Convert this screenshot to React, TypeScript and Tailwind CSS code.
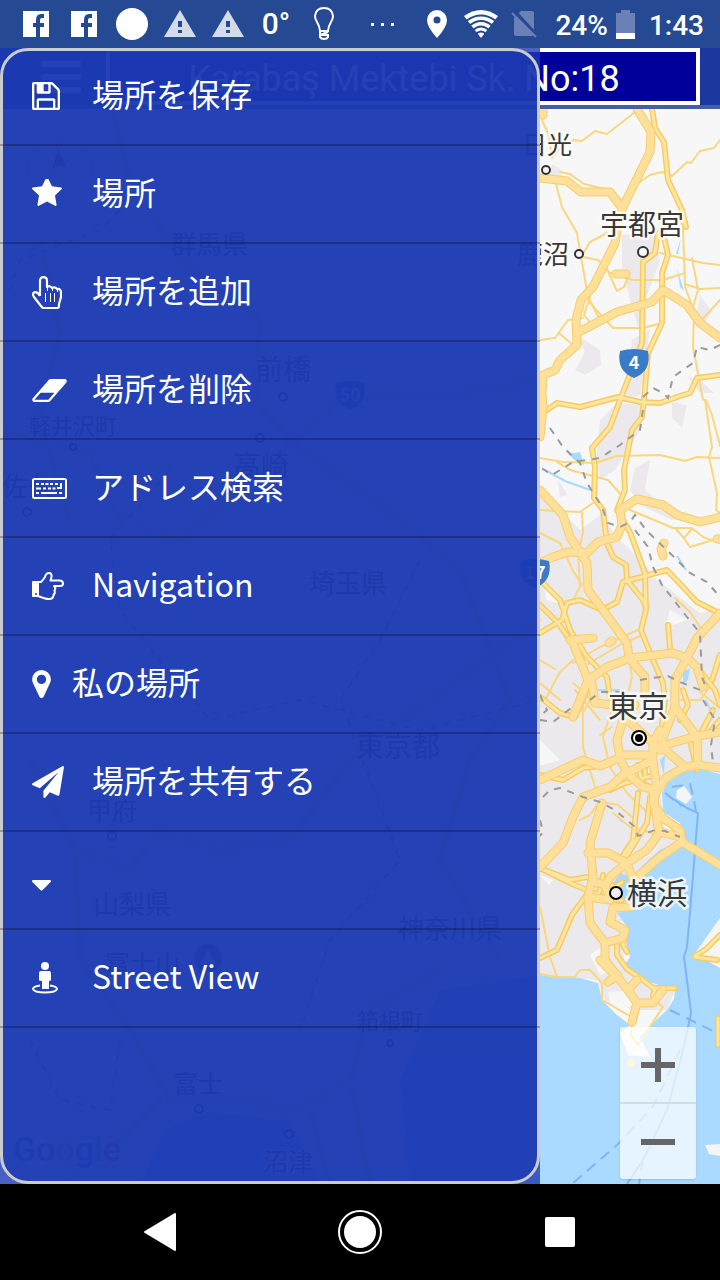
import { useState, type ReactNode } from "react"

type RoadKind = "major" | "medium" | "thin"

const roads: Record<RoadKind, string[]> = {
  thin: [
    "M573 140L582 141L595 131L607 134L635 112",
    "M545 109L542 120L549 136L552 158M552 158L560 148L573 140",
    "M640 182L650 175L662 172L672 176L687 162L691 163L700 151L714 148L720 140",
    "M555 180L562 207L577 233L588 297L600 320",
    "M583 254L590 242L607 233",
    "M583 257L598 260L610 273L633 280L663 280L685 273",
    "M605 265L617 291L624 287L629 275",
    "M560 172L570 174L584 184L610 190",
    "M660 253L703 263L720 265",
    "M683 227L685 287L690 300L694 315L693 347L703 400",
    "M692 258L698 290L692 310M685 284L700 289L720 288",
    "M540 340L555 338L568 320L583 318M560 334L573 345M590 297L584 315L592 325",
    "M590 303L613 328L643 328L662 323",
    "M720 300L697 325",
    "M540 458L563 462L595 463L617 456L660 455L685 461L697 457L720 458",
    "M557 462L570 470L608 480L623 497",
    "M705 400L712 447L709 457L717 493L716 510L720 513M706 400L712 415L720 446",
    "M540 510L580 512L593 503",
    "M582 513L583 533L578 553L580 587L573 600",
    "M630 510L673 528L692 528L703 537L720 543M683 537L690 547L720 538",
    "M675 528L684 538L692 529",
    "M540 533L560 543L573 571L582 585",
    "M573 663L600 647L638 630M588 664L620 645L640 636",
    "M540 660L555 669M545 700L560 672L573 660",
    "M675 598L690 612L700 627M573 683L585 693L590 700",
    "M583 707L583 747L595 787L600 790",
    "M613 707L603 737L610 767L627 793L645 810",
    "M540 907L550 957L557 977M613 813L630 827L655 834M607 803L618 805L632 817",
    "M540 974L557 977L575 977L580 970L590 970L602 983L602 1000L628 1015",
    "M632 1020L631 1035L638 1045L663 1007L657 1002",
    "M575 690L600 720M595 690L583 713M540 683L560 700M630 665L632 677L629 690",
    "M600 735L612 727M675 700L700 700L715 680M700 692L720 708",
    "M580 820L590 815L597 805",
  ],
  medium: [
    "M652 109L655 128L664 142L668 180L682 210L686 227L680 215",
    "M658 233L655 253L643 262L642 343L620 400L610 427L592 448L595 467L594 498L603 510L607 543L613 557L626 565L627 580L643 600L646 607",
    "M663 233L668 255L662 273L662 323L648 353L644 400L642 417L632 430L624 470L625 490L617 510L630 532L645 573L646 610L641 630L653 660L663 683L665 700",
    "M543 412L547 410L557 403L580 407L603 401L618 397L640 402L660 403L680 396L690 393L697 378L720 375",
    "M540 580L560 600L570 630L587 657L607 677L610 697",
    "M540 605L558 623L570 640",
    "M540 633L562 620L567 603L580 600L602 610L617 602L623 582L667 570L697 602L717 612",
    "M668 625L670 648",
    "M540 697L560 713L575 717L587 690",
    "M540 775L563 780L583 768L600 766",
    "M638 793L633 840L622 857M650 797L647 823L626 857",
    "M540 868L570 883L587 890L610 900L622 900M545 870L570 880L587 877L602 883",
    "M588 893L572 915L557 950L540 958",
    "M617 943L617 955L627 969L643 980L653 988L675 988",
    "M625 938L623 945L627 952M655 988L653 996",
    "M603 875L600 890L596 897M607 883L615 887L622 882",
    "M638 765L643 787M632 777L650 787M645 756L645 775M700 735L713 710M697 770L690 740",
    "M665 700L662 725M683 690L688 705L680 720M720 720L707 735M697 667L715 690L720 705",
    "M695 956L706 949L720 935M695 957L717 960M718 1018L718 1045",
    "M610 790L625 783L655 775M720 655L712 680",
  ],
  major: [
    "M637 109L651 132L650 152L620 213L615 243L593 287L581 300L576 320L577 345L560 360L555 370L543 375L542 393L543 407L540 437",
    "M540 178L567 181L581 192L610 192L622 208",
    "M577 333L617 312L652 302L663 290L687 305L700 323L720 338",
    "M543 100L543 115M616 274L626 274",
    "M540 490L563 515L570 537L587 563L588 590L603 610L627 643L629 658L645 677L645 693",
    "M540 563L553 557L568 552L587 553L598 542L617 537L622 525L620 510L637 499L663 505L677 515L700 522L720 517",
    "M588 680L607 667L630 658L673 653L687 658L697 667L703 687",
    "M720 613L697 638L687 658L675 680L675 707L697 737L698 765L720 768",
    "M573 643L588 680L580 700L573 717",
    "M570 640L593 638M609 643L612 641M664 543L661 549L663 556M717 539L720 539",
    "M540 780L583 760L600 766L620 758L617 740L623 720L635 705",
    "M592 683L595 703L613 705L633 725L653 743L660 750",
    "M620 755L653 755L653 743L660 730L662 740L675 707",
    "M655 748L693 737L720 732",
    "M663 748L677 760L685 767L667 777L657 790L653 803L663 818L680 830L682 842L720 865",
    "M620 758L627 773L643 787L657 790M627 773L653 760L657 790M698 765L685 767",
    "M623 775L610 787L583 797L573 817L563 843L540 867",
    "M602 803L590 843L593 877L588 897L590 923L605 943L605 960L620 980L628 990L637 1003L653 1003L663 990M637 1003L632 1022",
    "M588 853L608 853L627 863L633 880",
    "M653 793L658 827L660 832L647 850L627 863L612 875L605 885",
    "M682 842L660 857L637 877M660 832L680 837",
    "M588 897L610 900L605 885L595 882",
    "M630 907L613 908L610 922L625 930L623 938L605 943",
    "M608 982L618 975M628 990L637 980M600 960L615 975",
  ],
}

// prefectures to the west, mostly hidden by the drawer
const westRoads = [
  "M110 100L130 180L180 260L260 320L255 400L290 440L400 520L460 570L510 700L470 760L440 860L500 960",
  "M0 430L90 455L120 520L180 540L250 480L340 400L450 395L540 380",
  "M30 760L75 850L130 870L160 830L220 850L290 840L350 760L430 700L540 620",
  "M75 850L80 960L130 1030L170 1100L240 1100L300 1110L350 1080L370 1010L440 970",
  "M60 1184L130 1130L160 1100M310 1110L330 1184M350 1080L370 1184M40 240L60 330L40 420L70 520",
]

const rails = [
  "M550 428L563 447L580 463L587 483L602 507L608 523L620 527L630 522L635 515L646 530L677 560L690 573L707 582L720 597",
  "M643 410L640 430L620 445L600 458L573 462L552 475L540 467",
  "M635 530L648 547L653 567L662 585L687 617L700 633L702 677L707 690",
  "M643 397L653 388L663 393L668 398L673 377L693 363L697 347L710 350L720 345",
  "M543 797L550 790L560 788L583 797L600 802L615 810L635 827L638 836L655 830L665 831L680 837",
  "M540 720L553 722L575 705M590 700L600 692L620 692M640 680L652 678L668 676L680 682L700 690",
  "M540 695L547 710L540 716M703 700L715 720L711 745L713 763M540 820L543 832L540 836",
  "M130 200L100 230L20 260L10 290M170 470L110 540L120 610L160 660L210 720L300 700L420 730L540 700",
  "M420 560L380 640L340 700L400 860L330 940L300 1030M30 1040L60 1100L110 1110L120 1040",
]

const urban = [
  "M622 235L655 232L660 262L645 300L642 340L630 300L622 265Z",
  "M577 335L600 350L601 365L585 375L575 370L585 352Z",
  "M700 295L712 312L703 325L697 312Z",
  "M632 340L650 330L640 395L625 400Z",
  "M600 420L617 403L640 405L640 430L615 470L600 480L597 455Z",
  "M650 460L645 490L662 504L690 515L672 520L640 505L630 490L635 468Z",
  "M672 402L687 405L682 428L672 418Z",
  "M688 377L700 380L714 393L700 393Z",
  "M540 490L580 530L600 515L620 540L650 570L670 575L700 605L720 615L720 770L680 773L660 790L665 830L683 842L640 880L620 925L625 965L640 980L675 990L667 1010L640 1010L605 1003L598 980L540 975Z",
  "M558 480L568 495L560 497Z",
  "M560 182L562 170L552 164L550 180Z",
]

const land = [
  "M540 740L560 760L540 766Z",
  "M677 790L683 785L692 797L687 803L677 798Z",
  "M545 585L556 590L558 603L546 600Z",
  "M641 545L655 556L680 570L714 610L700 613L670 590L650 575Z",
  "M608 992L630 990L635 1004L622 1010L610 1003Z",
  "M590 955L604 945L613 970L600 975Z",
  "M540 875L553 880L549 885Z",
  "M670 610L688 620L665 628Z",
]

function Label({ x, y, size = 26, children }: { x: number; y: number; size?: number; children: ReactNode }) {
  return (
    <text
      x={x}
      y={y}
      fontSize={size}
      fill="#383838"
      stroke="#ffffff"
      strokeOpacity={0.75}
      strokeWidth={5}
      strokeLinejoin="round"
      paintOrder="stroke"
    >
      {children}
    </text>
  )
}

function Town({ x, y, r = 4 }: { x: number; y: number; r?: number }) {
  return <circle cx={x} cy={y} r={r} fill="#f7f7f7" stroke="#333" strokeWidth="2" />
}

function Shield({ x, y, children }: { x: number; y: number; children: ReactNode }) {
  return (
    <g transform={`translate(${x} ${y})`}>
      <path d="M-14 -12Q0 -16 14 -12Q18 8 0 15Q-18 8 -14 -12Z" fill="#3a7bc8" />
      <text y="6" textAnchor="middle" fontSize="18" fontWeight="700" fill="#fff" className="font-['Noto_Sans_CJK_JP',sans-serif]">
        {children}
      </text>
    </g>
  )
}

function MapCanvas() {
  return (
    <svg
      viewBox="0 109 720 1075"
      preserveAspectRatio="xMaxYMid slice"
      className="absolute inset-0 size-full font-['Noto_Sans_CJK_JP',sans-serif]"
      role="img"
      aria-label="地図"
    >
      <rect y="109" width="720" height="1075" fill="#f7f7f7" />
      <g fill="#ece9ed">
        {urban.map((d) => <path key={d} d={d} />)}
      </g>
      <g fill="#f7f7f7">
        {land.map((d) => <path key={d} d={d} />)}
      </g>
      <path
        fill="#aadaff"
        d="M720 774L700 769L683 772L667 783L662 793L663 812L680 823L683 840L660 850L643 865L633 877L620 873L613 883L618 895L633 910L617 913L627 927L627 945L630 957L623 967L643 980L675 990L674 999L667 1010L653 1023L640 1037L650 1057L628 1055L620 1033L630 1025L617 1015L602 1000L598 983L580 978L540 975L440 990L400 1080L410 1184H720Z"
      />
      <path fill="#aadaff" d="M140 1184L165 1130L210 1112L290 1120L320 1184Z" />
      <path fill="#aadaff" d="M568 454L580 452L584 465L577 462ZM683 672L690 668L688 680L683 684ZM660 760L665 755L664 775ZM617 818L629 825L621 822ZM681 238L676 254L678 254ZM677 268L684 291L680 287Z" />
      <path fill="#f5f5f5" d="M677 790L684 786L692 797L686 804L676 798ZM693 956L720 918V968L709 962L706 957ZM705 1145L720 1144V1156L709 1154ZM665 840L648 857L642 860Z" />
      <path d="M545 470L565 481L590 490M677 556L686 570M598 690L620 690M705 700L714 715" fill="none" stroke="#aadaff" strokeWidth="2" />
      <g fill="none" stroke="#7fb5f5" strokeWidth="2">
        <path d="M670 797L687 808L698 813L690 913L687 947L684 957L687 980L691 1013L683 1050L667 1110L643 1160L627 1184" />
        <path d="M665 793L682 806M672 787L690 784L694 800L696 812M670 1010L717 1033M680 1050L653 1107L617 1145L573 1183M643 1160L639 1184" strokeDasharray="11 7" />
      </g>
      <g fill="none" strokeLinecap="round" strokeLinejoin="round">
        {roads.thin.map((d) => <path key={d} d={d} stroke="#f9d77f" strokeWidth="2" />)}
        {roads.medium.map((d) => <path key={d} d={d} stroke="#f6cb62" strokeWidth="6" />)}
        {roads.medium.map((d) => <path key={d} d={d} stroke="#ffe5a2" strokeWidth="3" />)}
        {westRoads.map((d) => <path key={d} d={d} stroke="#fbe0a0" strokeWidth="4" />)}
        {roads.major.map((d) => <path key={d} d={d} stroke="#f7cd68" strokeWidth="9" />)}
        {roads.major.map((d) => <path key={d} d={d} stroke="#ffe09a" strokeWidth="7" />)}
      </g>
      <g fill="none" stroke="#9b9b9b" strokeWidth="2" strokeDasharray="7 7">
        {rails.map((d) => <path key={d} d={d} />)}
      </g>
      <circle cx="631" cy="1063" r="4" fill="#ffe09a" />

      <circle cx="60" cy="169" r="32" fill="#fff" stroke="#ddd" />
      <path d="M58 149L67 168L58 165L52 170Z" fill="#c33" />

      <Label x={170} y={254}>群馬県</Label>
      <Label x={255} y={380} size={28}>前橋</Label>
      <Town x={283} y={397} />
      <Shield x={350} y={395}>50</Shield>
      <Label x={29} y={434} size={22}>軽井沢町</Label>
      <Town x={73} y={447} r={3} />
      <Town x={260} y={438} />
      <Label x={233} y={476} size={28}>高崎</Label>
      <Label x={2} y={496}>佐久</Label>
      <Town x={27} y={512} />
      <Label x={309} y={593}>埼玉県</Label>
      <Label x={356} y={757} size={28}>東京都</Label>
      <Label x={87} y={820} size={25}>甲府</Label>
      <Town x={112} y={836} />
      <Label x={93} y={914}>山梨県</Label>
      <Label x={398} y={938}>神奈川県</Label>
      <Label x={105} y={973} size={25}>富士山</Label>
      <circle cx="208" cy="958" r="14" fill="#6a7a80" />
      <path d="M200 964L208 950L216 964Z" fill="#fff" />
      <Label x={357} y={1029} size={22}>箱根町</Label>
      <Town x={390} y={1043} r={3} />
      <Label x={173} y={1093} size={25}>富士</Label>
      <Town x={199} y={1109} />
      <Town x={289} y={1134} />
      <Label x={263} y={1171} size={25}>沼津</Label>
      <text x="13" y="1161" fontSize="34" fontWeight="500" className="font-['Roboto',sans-serif]">
        <tspan fill="#4285f4">G</tspan>
        <tspan fill="#ea4335">o</tspan>
        <tspan fill="#fbbc05">o</tspan>
        <tspan fill="#4285f4">g</tspan>
        <tspan fill="#34a853">l</tspan>
        <tspan fill="#ea4335">e</tspan>
      </text>

      <Label x={522} y={154} size={25}>日光</Label>
      <Town x={546} y={170} />
      <Label x={517} y={264}>鹿沼</Label>
      <Town x={579} y={254} />
      <Label x={600} y={235} size={28}>宇都宮</Label>
      <Town x={643} y={252} r={5} />
      <Shield x={634} y={363}>4</Shield>
      <Shield x={535} y={573}>17</Shield>
      <Label x={608} y={717} size={30}>東京</Label>
      <circle cx="639" cy="738" r="8" fill="#000" />
      <circle cx="639" cy="738" r="5" fill="#000" stroke="#fff" strokeWidth="2" />
      <Label x={627} y={904} size={30}>横浜</Label>
      <circle cx="616" cy="893" r="6" fill="#eee" stroke="#000" strokeWidth="2" />
    </svg>
  )
}

function Glyph({ box, className, d }: { box: string; className: string; d: string }) {
  return (
    <svg viewBox={box} className={className} fill="currentColor" aria-hidden="true">
      <path d={d} />
    </svg>
  )
}

const saveIcon = (
  <Glyph
    box="128 128 1536 1536"
    className="size-7"
    d="M512 1536h768v-384h-768v384zm896 0h128v-896q0-14-10-38.5t-20-34.5l-281-281q-10-10-34-20t-39-10v416q0 40-28 68t-68 28h-576q-40 0-68-28t-28-68v-416h-128v1280h128v-416q0-40 28-68t68-28h832q40 0 68 28t28 68v416zm-384-928v-320q0-13-9.5-22.5t-22.5-9.5h-192q-13 0-22.5 9.5t-9.5 22.5v320q0 13 9.5 22.5t22.5 9.5h192q13 0 22.5-9.5t9.5-22.5zm640 32v928q0 40-28 68t-68 28h-1344q-40 0-68-28t-28-68v-1344q0-40 28-68t68-28h928q40 0 88 20t76 48l280 280q28 28 48 76t20 88z"
  />
)

const starIcon = (
  <Glyph
    box="64 128 1664 1664"
    className="size-[30px]"
    d="M1728 647q0 22-26 48l-363 354 86 500q1 7 1 20 0 21-10.5 35.5t-30.5 14.5q-19 0-40-12l-449-236-449 236q-22 12-40 12-21 0-31.5-14.5t-10.5-35.5q0-6 2-20l86-500-364-354q-25-27-25-48 0-37 56-46l502-73 225-455q19-41 49-41t49 41l225 455 502 73q56 9 56 46z"
  />
)

const pointerIcon = (
  <svg viewBox="0 0 30 33" className="h-[33px] w-[30px]" fill="none" stroke="currentColor" aria-hidden="true">
    <path
      strokeWidth="2.2"
      strokeLinejoin="round"
      d="M8 20V5Q8 1.200 11.500 1.200Q15 1.200 15 5V11Q18 9 20 12Q23 10.500 25 13Q29 12 29 17V21L27 28V30Q27 32 25 32H12Q10 32 9 30L2 21Q0 18 2 16.500Q5 15 8 20"
    />
    <path strokeWidth="1" d="M13.500 17V26M18.500 17V26M22.500 17V26M15.500 11V15M20.500 12V15M25.500 13V16" />
  </svg>
)

const eraserIcon = (
  <Glyph
    box="64 256 1920 1280"
    className="h-[23px] w-[35px]"
    d="M960 1408l336-384h-768l-336 384h768zm1013-1077q15 34 9.5 71.5t-30.5 65.5l-896 1024q-38 44-96 44h-768q-38 0-69.5-20.5t-47.5-54.5q-15-34-9.5-71.5t30.5-65.5l896-1024q38-44 96-44h768q38 0 69.5 20.5t47.5 54.5z"
  />
)

const keyboardIcon = (
  <svg viewBox="0 0 35 21" className="h-[21px] w-[35px]" fill="currentColor" aria-hidden="true">
    <rect x="1" y="1" width="33" height="19" rx="1.5" fill="none" stroke="currentColor" strokeWidth="2" />
    <path d="M4 5h3v2h-3zM9 5h3v2h-3zM13.500 5h3v2h-3zM18 5h3v2h-3zM23 5h3v2h-3zM28 5h2v6h-5v-2h3zM4 9.500h5v2h-5zM11 9.500h3v2h-3zM16 9.500h3v2h-3zM20.500 9.500h3v2h-3zM4 14h3v2h-3zM9 14h16v2h-16zM27 14h3v2h-3z" />
  </svg>
)

const pointRightIcon = (
  <svg viewBox="0 0 32 28" className="h-7 w-8" aria-hidden="true">
    <path fill="currentColor" fillRule="evenodd" d="M1 9h6v16h-6q-1 0-1-1v-14q0-1 1-1zM4 21a1 1 0 1 0 0 2a1 1 0 0 0 0-2z" />
    <path
      fill="none"
      stroke="currentColor"
      strokeWidth="2"
      strokeLinejoin="round"
      d="M6 10H9Q11 8 13 5Q14 1 17 1Q20 1 19.500 5L18.500 8.500H28Q31 9 31 11.500Q31 14 28 14H22Q24.500 16 22.500 18.500Q23.500 21 21.500 23Q21.500 27 17 27Q13 27 6 24"
    />
  </svg>
)

const markerIcon = (
  <Glyph
    box="384 128 1024 1536"
    className="h-7 w-[19px]"
    d="M1152 640q0-106-75-181t-181-75-181 75-75 181 75 181 181 75 181-75 75-181zm256 0q0 109-33 179l-364 774q-16 33-47.5 52t-67.5 19-67.5-19-46.5-52l-365-774q-33-70-33-179 0-212 150-362t362-150 362 150 150 362z"
  />
)

const planeIcon = (
  <Glyph
    box="0 0 1792 1792"
    className="size-8"
    d="M1764 11q33 24 27 64l-256 1536q-5 29-32 45-14 8-31 8-11 0-24-5l-453-185-242 295q-18 23-49 23-13 0-22-4-19-7-30.5-23.5t-11.5-36.5v-349l864-1059-1069 925-395-162q-37-14-40-55-2-40 32-59l1664-960q15-9 32-9 20 0 36 11z"
  />
)

const caretIcon = (
  <Glyph
    box="384 384 1024 1280"
    className="h-6 w-[19px]"
    d="M1408 1088q0 26-19 45l-448 448q-19 19-45 19t-45-19l-448-448q-19-19-19-45t19-45 45-19h896q26 0 45 19t19 45z"
  />
)

const streetViewIcon = (
  <svg viewBox="0 0 26 32" className="h-8 w-[26px]" fill="currentColor" aria-hidden="true">
    <circle cx="13" cy="4" r="4" />
    <path d="M9 9h8q2 0 2 2v7q0 1-2 1v8h-7v-8q-3 0-3-1v-7q0-2 2-2z" />
    <path d="M8 23.500Q1 24.500 1 27Q2 30.500 13 30.500Q24 30.500 25 27Q25 24.500 18 23.500" fill="none" stroke="currentColor" strokeWidth="2" />
  </svg>
)

const menuItems = [
  { id: "save", label: "場所を保存", icon: saveIcon },
  { id: "places", label: "場所", icon: starIcon },
  { id: "add", label: "場所を追加", icon: pointerIcon },
  { id: "delete", label: "場所を削除", icon: eraserIcon },
  { id: "search", label: "アドレス検索", icon: keyboardIcon },
  { id: "navigation", label: "Navigation", icon: pointRightIcon },
  { id: "mine", label: "私の場所", icon: markerIcon, narrow: true },
  { id: "share", label: "場所を共有する", icon: planeIcon },
  { id: "more", label: "", icon: caretIcon },
  { id: "street", label: "Street View", icon: streetViewIcon },
]

function Drawer() {
  return (
    <nav className="absolute inset-y-0 left-0 w-3/4 bg-[#1c3ab1]/80">
      <div className="absolute inset-0 rounded-[28px] border-[3px] border-[#ccc] bg-[#1c3ab1]/80 bg-clip-padding" />
      <ul className="relative">
        {menuItems.map((item) => (
          <li key={item.id} className="border-b-2 border-black/25">
            <button
              type="button"
              aria-label={item.label || "もっと見る"}
              className="flex h-24 w-full items-center pl-8 text-left text-[32px] leading-10 text-white font-['Noto_Sans_CJK_JP',sans-serif]"
            >
              <span className={item.narrow ? "w-10" : "w-15"}>{item.icon}</span>
              <span className="pb-[6px]">{item.label}</span>
            </button>
          </li>
        ))}
      </ul>
    </nav>
  )
}

function FacebookIcon() {
  return (
    <svg viewBox="0 0 26 26" className="size-[26px]" aria-hidden="true">
      <path fill="#fff" d="M0 0H26V26H0Z" />
      <path fill="#254992" d="M13 26V16H10V12H13V9Q13 3 18 3H21V7H19Q17 7 17 9V12H21V16H17V26Z" />
    </svg>
  )
}

function WarningIcon() {
  return (
    <svg viewBox="0 0 32 28" className="h-7 w-8" aria-hidden="true">
      <path fill="#d3daea" d="M16 0L32 27H0Z" />
      <path fill="#254992" d="M14 11h4v6h-4zM14 20h4v3h-4z" />
    </svg>
  )
}

function StatusBar() {
  return (
    <div className="flex h-12 items-center bg-[#254992] pr-4 pl-3 text-[28px] leading-8 font-medium text-white font-['Roboto',sans-serif]">
      <div className="flex items-center *:flex *:w-12 *:justify-center">
        <span><FacebookIcon /></span>
        <span><FacebookIcon /></span>
        <span><i className="size-8 rounded-full bg-white" /></span>
        <span><WarningIcon /></span>
        <span><WarningIcon /></span>
        <span className="text-3xl">0°</span>
        <span>
          <svg viewBox="0 0 20 34" className="h-[34px] w-5" fill="none" stroke="#fff" strokeWidth="2" aria-hidden="true">
            <path d="M6 24Q6 20 3 15Q1 12 1 9Q2 1 10 1Q18 1 19 9Q19 12 17 15Q14 20 14 24ZM6 24V28L14 25M6 28H14V30Q13 32 10 32Q7 32 6 30Z" />
          </svg>
        </span>
      </div>
      <div className="ml-[23px] flex gap-[7px]">
        <i className="size-[3px] bg-white" />
        <i className="size-[3px] bg-white" />
        <i className="size-[3px] bg-white" />
      </div>
      <div className="ml-auto flex items-center">
        <svg viewBox="0 0 20 28" className="mr-4 h-7 w-5" aria-hidden="true">
          <path fill="#fff" fillRule="evenodd" d="M10 0A10 10 0 0 1 20 10Q20 17 10 28Q0 17 0 10A10 10 0 0 1 10 0ZM10 6.500a3.500 3.500 0 1 0 0 7a3.500 3.500 0 0 0 0-7Z" />
        </svg>
        <svg viewBox="0 0 36 28" className="mr-3 h-7 w-9" fill="none" aria-hidden="true">
          <path fill="#fff" d="M1 6Q18 -6 35 6L18 28Z" />
          <path stroke="#254992" strokeWidth="2" d="M3 11Q18 0 33 11M6 16Q18 6 30 16M10 20Q18 13 26 20M13 24Q18 19 23 24" />
        </svg>
        <svg viewBox="0 0 26 28" className="mr-[18px] h-7 w-[26px]" aria-hidden="true">
          <path fill="#6b80b5" d="M10 1H21Q23 1 23 3V24Q23 26 21 26H5Q3 26 3 24V8Z" />
          <path d="M2 0L26 26" stroke="#254992" strokeWidth="4" />
          <path d="M1 3L25 27" stroke="#6b80b5" strokeWidth="2" />
        </svg>
        <span className="pt-[3px]">24%</span>
        <svg viewBox="0 0 19 29" className="mr-[14px] ml-2 h-[29px] w-[19px]" aria-hidden="true">
          <path fill="#6b80b5" d="M5 0h9v3h5v20h-19v-20h5z" />
          <path fill="#fff" d="M0 23h19v6h-19z" />
        </svg>
        <span className="pt-[3px]">1:43</span>
      </div>
    </div>
  )
}

function SystemNav() {
  return (
    <div className="flex h-24 bg-black px-15 *:flex *:flex-1 *:items-center *:justify-center">
      <button type="button" aria-label="戻る">
        <svg viewBox="0 0 32 38" className="h-[38px] w-8" aria-hidden="true">
          <path fill="#fff" stroke="#fff" strokeWidth="2" strokeLinejoin="round" d="M1 19L31 1V37Z" />
        </svg>
      </button>
      <button type="button" aria-label="ホーム">
        <svg viewBox="0 0 44 44" className="size-11" aria-hidden="true">
          <circle cx="22" cy="22" r="21" fill="none" stroke="#fff" strokeWidth="2" />
          <circle cx="22" cy="22" r="16" fill="#fff" />
        </svg>
      </button>
      <button type="button" aria-label="最近使ったアプリ">
        <span className="size-[30px] rounded-[2px] bg-white" />
      </button>
    </div>
  )
}

export default function App() {
  const [address, setAddress] = useState("Karabaş Mektebi Sk. No:18")

  return (
    <div className="flex min-h-screen flex-col overflow-hidden">
      <StatusBar />
      <main className="relative flex flex-1 flex-col">
        <header className="flex h-[61px] border-b-4 border-[#4460a5] bg-[#1c37a0] pr-5">
          <button type="button" aria-label="メニュー" className="flex w-[106px] flex-col items-center justify-center gap-[7px] pl-4">
            <span className="h-[6px] w-10 rounded-full bg-white" />
            <span className="h-[6px] w-10 rounded-full bg-white" />
            <span className="h-[6px] w-10 rounded-full bg-white" />
          </button>
          <input
            aria-label="住所"
            value={address}
            onChange={(e) => setAddress(e.target.value)}
            className="min-w-0 flex-1 border-4 border-white bg-[#00009a] pt-1 pl-[2px] text-center text-4xl text-white font-['Roboto',sans-serif]"
          />
        </header>
        <div className="relative flex-1 overflow-hidden">
          <MapCanvas />
          <div className="absolute right-6 bottom-[5px] w-[76px] rounded-[3px] bg-white/70 shadow">
            <button type="button" aria-label="拡大" className="flex h-[77px] w-full items-center justify-center border-b-2 border-[#cfdde9]">
              <svg viewBox="0 0 34 34" className="size-[34px]" aria-hidden="true">
                <path d="M14 0h6v14h14v6h-14v14h-6v-14h-14v-6h14z" fill="#666" />
              </svg>
            </button>
            <button type="button" aria-label="縮小" className="flex h-[75px] w-full items-center justify-center">
              <span className="h-[6px] w-[34px] bg-[#666]" />
            </button>
          </div>
        </div>
        <Drawer />
      </main>
      <SystemNav />
    </div>
  )
}
